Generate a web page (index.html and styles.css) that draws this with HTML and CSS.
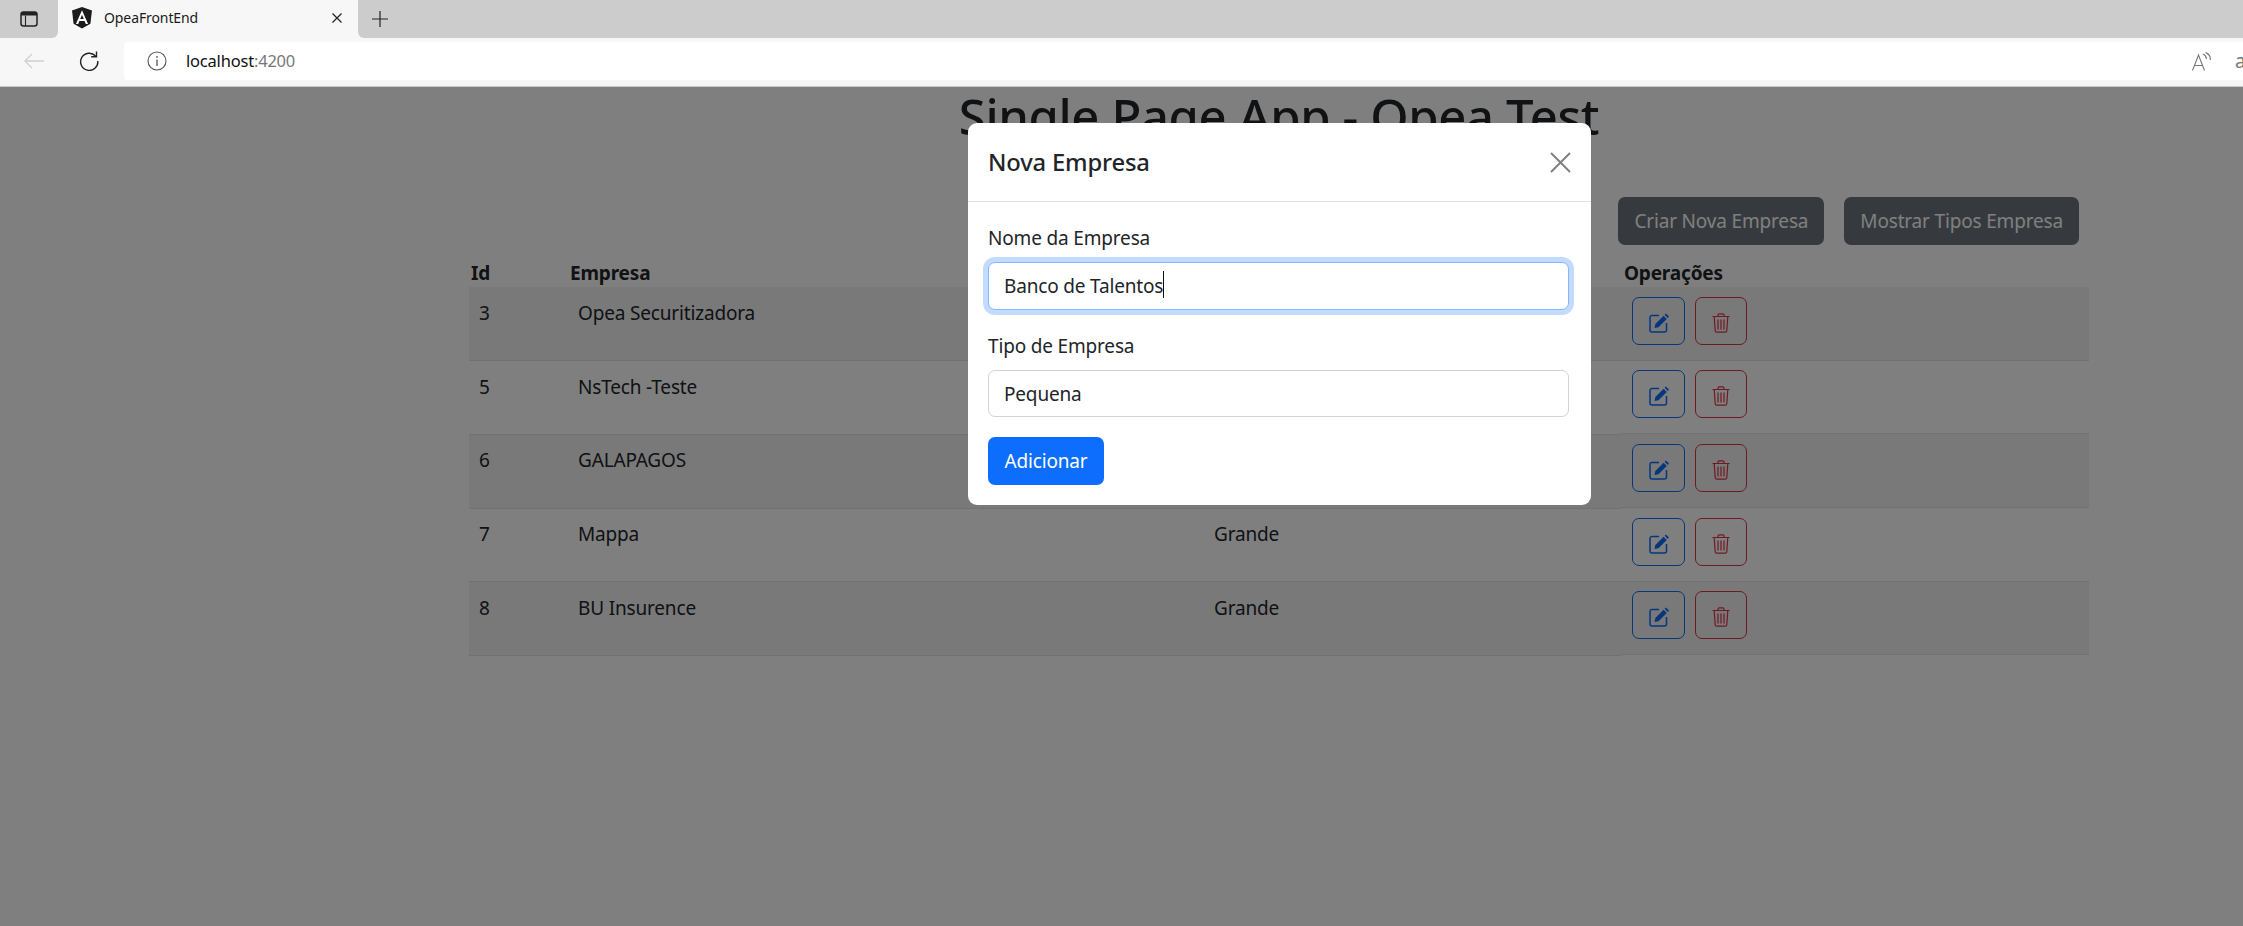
FILE: index.html
```html
<!DOCTYPE html>
<html lang="en">
<head>
    <meta charset="UTF-8">
    <meta name="viewport" content="width=device-width, initial-scale=1.0">
    <title>OpeaFrontEnd</title>
    <link rel="stylesheet" href="styles.css">
</head>
<body>
    <div class="tab-strip">
        <div class="strip-left">
            <svg class="ico-panel" viewBox="0 0 18 16"><rect x="1" y="1" width="16" height="14" rx="2.5" fill="none" stroke="#222" stroke-width="1.5"/><path d="M1 2.5 a1.5 1.5 0 0 1 1.5-1.5 h13 a1.5 1.5 0 0 1 1.5 1.5 V4.6 H1 z" fill="#222"/><path d="M5.5 4.6 V15" stroke="#222" stroke-width="1.1"/></svg>
        </div>
        <div class="tab">
            <svg class="ico-ng" viewBox="0 0 20 22"><path d="M10 0 L0 3.5 L1.6 16.8 L10 21.5 L18.4 16.8 L20 3.5 z" fill="#1c1c1f"/><path d="M10 3.2 L3.9 17 H6.2 L7.4 14 H12.6 L13.8 17 H16.1 z M8.2 12.1 L10 7.8 L11.8 12.1 z" fill="#fff"/></svg>
            <span class="tab-title">OpeaFrontEnd</span>
            <svg class="ico-close" viewBox="0 0 10 10"><path d="M0.5 0.5 L9.5 9.5 M9.5 0.5 L0.5 9.5" stroke="#222" stroke-width="1.2"/></svg>
        </div>
        <div class="strip-right">
            <svg class="ico-plus" viewBox="0 0 16 16"><path d="M8 0 V16 M0 8 H16" stroke="#222" stroke-width="1.2"/></svg>
        </div>
    </div>

    <div class="toolbar">
        <svg class="ico-back" viewBox="0 0 20 16"><path d="M20 8 H1 M8 1 L1 8 L8 15" fill="none" stroke="#cfcfcf" stroke-width="1.3"/></svg>
        <svg class="ico-reload" viewBox="0 0 20 20"><path d="M16.6 5 A8.6 8.6 0 1 0 18.8 10" fill="none" stroke="#222" stroke-width="1.4"/><path d="M17.5 0.5 V5.8 H12.2" fill="none" stroke="#222" stroke-width="1.4"/></svg>
        <div class="address">
            <svg class="ico-info" viewBox="0 0 20 20"><circle cx="10" cy="10" r="9" fill="none" stroke="#555" stroke-width="1.1"/><path d="M10 8.6 V15" stroke="#555" stroke-width="1.3"/><circle cx="10" cy="5.9" r="0.9" fill="#555"/></svg>
            <span class="url">localhost<span class="port">:4200</span></span>
            <svg class="ico-read" viewBox="0 0 20 19"><path d="M0.5 18.5 L6.5 3 L12.5 18.5 M2.5 13.5 H10.5" fill="none" stroke="#777" stroke-width="1.1"/><path d="M11 2 A6 6 0 0 1 14.5 7 M13.5 0.5 A8 8 0 0 1 18.5 8" fill="none" stroke="#777" stroke-width="1.2"/></svg>
            <span class="cut-a">a</span>
        </div>
    </div>

    <div class="page">
        <div class="container">
            <h1>Single Page App - Opea Test</h1>
            <div class="actions">
                <button class="btn btn-secondary">Criar Nova Empresa</button>
                <button class="btn btn-secondary">Mostrar Tipos Empresa</button>
            </div>
            <table class="companies">
                <thead>
                    <tr><th class="col-id">Id</th><th class="col-name">Empresa</th><th class="col-type"></th><th>Operações</th></tr>
                </thead>
                <tbody>
                    <tr>
                        <td>3</td><td>Opea Securitizadora</td><td></td>
                        <td class="ops">
                            <button class="icon-btn edit"><svg viewBox="0 0 20 20"><use href="#edit"/></svg></button>
                            <button class="icon-btn del"><svg viewBox="0 0 18 20"><use href="#trash"/></svg></button>
                        </td>
                    </tr>
                    <tr>
                        <td>5</td><td>NsTech -Teste</td><td></td>
                        <td class="ops">
                            <button class="icon-btn edit"><svg viewBox="0 0 20 20"><use href="#edit"/></svg></button>
                            <button class="icon-btn del"><svg viewBox="0 0 18 20"><use href="#trash"/></svg></button>
                        </td>
                    </tr>
                    <tr>
                        <td>6</td><td>GALAPAGOS</td><td></td>
                        <td class="ops">
                            <button class="icon-btn edit"><svg viewBox="0 0 20 20"><use href="#edit"/></svg></button>
                            <button class="icon-btn del"><svg viewBox="0 0 18 20"><use href="#trash"/></svg></button>
                        </td>
                    </tr>
                    <tr>
                        <td>7</td><td>Mappa</td><td>Grande</td>
                        <td class="ops">
                            <button class="icon-btn edit"><svg viewBox="0 0 20 20"><use href="#edit"/></svg></button>
                            <button class="icon-btn del"><svg viewBox="0 0 18 20"><use href="#trash"/></svg></button>
                        </td>
                    </tr>
                    <tr>
                        <td>8</td><td>BU Insurence</td><td>Grande</td>
                        <td class="ops">
                            <button class="icon-btn edit"><svg viewBox="0 0 20 20"><use href="#edit"/></svg></button>
                            <button class="icon-btn del"><svg viewBox="0 0 18 20"><use href="#trash"/></svg></button>
                        </td>
                    </tr>
                </tbody>
            </table>
        </div>

        <div class="backdrop">
            <div class="modal">
                <div class="modal-header">
                    <h5>Nova Empresa</h5>
                    <svg class="modal-close" viewBox="0 0 21 21"><path d="M1 1 L20 20 M20 1 L1 20" stroke="#808080" stroke-width="2"/></svg>
                </div>
                <div class="modal-body">
                    <label>Nome da Empresa</label>
                    <div class="field">
                        <input class="form-control focused" type="text" value="Banco de Talentos">
                        <span class="caret"></span>
                    </div>
                    <label>Tipo de Empresa</label>
                    <div class="field">
                        <input class="form-control" type="text" value="Pequena">
                    </div>
                    <button class="btn btn-primary">Adicionar</button>
                </div>
            </div>
        </div>
    </div>

    <svg class="defs" width="0" height="0">
        <symbol id="edit" viewBox="0 0 20 20">
            <path d="M10 2.5 H3 A2 2 0 0 0 1 4.5 V17 A2 2 0 0 0 3 19 H15.5 A2 2 0 0 0 17.5 17 V10" fill="none" stroke="currentColor" stroke-width="1.5"/>
            <path d="M5.5 15 L6.3 11 L14.6 2.7 L17.8 5.9 L9.5 14.2 z M15.6 1.7 L16.9 0.4 L20 3.5 L18.8 4.9 z" fill="currentColor"/>
        </symbol>
        <symbol id="trash" viewBox="0 0 18 20">
            <path d="M0.5 3.5 H17.5 M6 3.5 V2 A1.2 1.2 0 0 1 7.2 0.8 H10.8 A1.2 1.2 0 0 1 12 2 V3.5 M2.2 3.5 L3.2 17.8 A1.5 1.5 0 0 0 4.7 19.2 H13.3 A1.5 1.5 0 0 0 14.8 17.8 L15.8 3.5" fill="none" stroke="currentColor" stroke-width="1.2"/>
            <path d="M6 6.5 V16.5 M9 6.5 V16.5 M12 6.5 V16.5" fill="none" stroke="currentColor" stroke-width="1.2"/>
        </symbol>
    </svg>
</body>
</html>
```

FILE: styles.css
```css
* {
    box-sizing: border-box;
}
html, body {
    height: 100%;
}
body {
    margin: 0;
    overflow: hidden;
    font-family: "Noto Sans", "Open Sans", sans-serif;
    font-size: 19px;
    letter-spacing: -0.17px;
    line-height: 30px;
    color: #212529;
    background: #fff;
}

/* browser chrome */
.tab-strip {
    display: flex;
    height: 38px;
    background: #f7f7f7;
}
.strip-left {
    width: 58px;
    display: flex;
    align-items: center;
    padding-left: 20px;
    background: #cccccc;
    border-bottom-right-radius: 6px;
}
.ico-panel {
    width: 18px;
    height: 16px;
}
.tab {
    width: 300px;
    display: flex;
    align-items: center;
    padding-left: 14px;
    padding-right: 16px;
    padding-bottom: 2px;
}
.ico-ng {
    width: 20px;
    height: 22px;
    margin-right: 12px;
}
.tab-title {
    flex: 1;
    font-size: 14px;
    letter-spacing: -0.1px;
    color: #1a1a1a;
}
.ico-close {
    width: 10px;
    height: 10px;
}
.strip-right {
    flex: 1;
    display: flex;
    align-items: center;
    padding-left: 14px;
    background: #cccccc;
    border-bottom-left-radius: 6px;
}
.ico-plus {
    width: 16px;
    height: 16px;
}
.toolbar {
    display: flex;
    align-items: center;
    height: 49px;
    background: #f7f7f7;
    border-bottom: 1px solid #c9c9c9;
    padding-bottom: 2px;
}
.ico-back {
    width: 20px;
    height: 16px;
    margin-left: 24px;
}
.ico-reload {
    width: 20px;
    height: 20px;
    margin-left: 35px;
}
.address {
    flex: 1;
    display: flex;
    align-items: center;
    height: 38px;
    margin-left: 25px;
    padding-left: 23px;
    background: #fff;
    border-radius: 4px 0 0 4px;
    overflow: hidden;
}
.ico-info {
    width: 20px;
    height: 20px;
}
.url {
    flex: 1;
    margin-left: 19px;
    font-size: 16.5px;
    letter-spacing: -0.2px;
    color: #111;
}
.port {
    color: #777;
}
.ico-read {
    width: 20px;
    height: 19px;
}
.cut-a {
    width: 8px;
    margin-left: 23px;
    font-size: 19px;
    color: #777;
}

/* app */
.page {
    position: relative;
    height: 839px;
    overflow: hidden;
}
.container {
    width: 1620px;
    margin-left: 469px;
}
h1 {
    margin: 0;
    height: 110px;
    font-size: 49px;
    font-weight: 500;
    line-height: 58px;
    letter-spacing: -0.4px;
    text-align: center;
}
.actions {
    display: flex;
    justify-content: flex-end;
    gap: 20px;
    padding-right: 10px;
}
.btn {
    height: 48px;
    padding: 0 16px;
    border: none;
    border-radius: 7px;
    font: inherit;
    letter-spacing: inherit;
    color: #fff;
}
.btn-secondary {
    background: #6c757d;
}
.btn-primary {
    width: 116px;
    padding: 0;
    background: #0d6efd;
}
.companies {
    width: 1620px;
    margin-top: 14px;
    border-collapse: collapse;
    table-layout: fixed;
}
.companies th {
    padding: 0 2px;
    height: 28px;
    line-height: 25px;
    font-weight: 700;
    font-size: 19px;
    text-align: left;
}
.col-id {
    width: 99px;
}
.col-name {
    width: 636px;
}
.col-type {
    width: 418px;
}
.companies td {
    height: 73.7px;
    padding: 10.5px 10px 10px;
    vertical-align: top;
    border-bottom: 1px solid #dee2e6;
}
.companies tbody tr:nth-child(odd) {
    background: #f2f2f2;
}
.companies td.ops {
    display: flex;
    gap: 10px;
    padding-top: 9.5px;
}
.icon-btn {
    display: flex;
    align-items: center;
    justify-content: center;
    height: 48px;
    padding: 4px 0 0;
    background: transparent;
    border: 1px solid;
    border-radius: 7px;
}
.icon-btn.edit {
    width: 53px;
    color: #0d6efd;
}
.icon-btn.edit svg {
    width: 20px;
    height: 20px;
}
.icon-btn.del {
    width: 52px;
    color: #dc3545;
}
.icon-btn.del svg {
    width: 18px;
    height: 20px;
}
.defs {
    position: absolute;
}

/* modal */
.backdrop {
    position: absolute;
    inset: 0;
    padding: 36px 0 0 968px;
    background: rgba(0, 0, 0, 0.5);
}
.modal {
    width: 623px;
    height: 382px;
    background: #fff;
    border-radius: 9px;
}
.modal-header {
    display: flex;
    align-items: center;
    justify-content: space-between;
    height: 79px;
    padding: 0 20px;
    border-bottom: 1px solid #dee2e6;
}
.modal-header h5 {
    margin: 0;
    font-size: 23.8px;
    font-weight: 500;
    line-height: 38px;
}
.modal-close {
    width: 21px;
    height: 21px;
}
.modal-body {
    padding: 20px 22px 20px 20px;
}
.modal-body label {
    display: block;
    height: 30px;
    margin-bottom: 10px;
    line-height: 32px;
}
.field {
    position: relative;
    margin-bottom: 20px;
}
.form-control {
    display: block;
    width: 100%;
    height: 47.5px;
    padding: 1px 15px 0;
    border: 1px solid #ced4da;
    border-radius: 7px;
    font: inherit;
    letter-spacing: inherit;
    color: #212529;
    outline: none;
}
.form-control.focused {
    border-color: #86b7fe;
    box-shadow: 0 0 0 5px rgba(13, 110, 253, 0.25);
}
.caret {
    position: absolute;
    left: 175px;
    top: 9px;
    width: 1px;
    height: 27px;
    background: #111;
}
```
